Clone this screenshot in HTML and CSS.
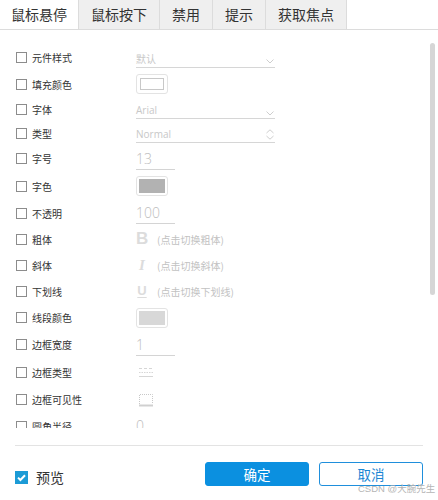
FILE: index.html
```html
<!DOCTYPE html>
<html lang="zh">
<head>
<meta charset="utf-8">
<link rel="stylesheet" href="styles.css">
</head>
<body>
<div class="tabs">
  <div class="tab active">鼠标悬停</div>
  <div class="tab">鼠标按下</div>
  <div class="tab">禁用</div>
  <div class="tab">提示</div>
  <div class="tab">获取焦点</div>
</div>

<div class="panel">
  <div class="row h27">
    <span class="cb"></span><span class="label">元件样式</span>
    <div class="select"><span>默认</span>
      <svg class="chev" width="8" height="5" viewBox="0 0 8 5"><path d="M0.5 0.5 L4 4 L7.5 0.5" fill="none" stroke="#c8c8c8" stroke-width="0.9"/></svg>
    </div>
  </div>
  <div class="row h26">
    <span class="cb"></span><span class="label">填充颜色</span>
    <div class="swatch"><span class="sw-inner sw-white"></span></div>
  </div>
  <div class="row h24">
    <span class="cb"></span><span class="label">字体</span>
    <div class="select latin"><span>Arial</span>
      <svg class="chev" width="8" height="5" viewBox="0 0 8 5"><path d="M0.5 0.5 L4 4 L7.5 0.5" fill="none" stroke="#c8c8c8" stroke-width="0.9"/></svg>
    </div>
  </div>
  <div class="row h24">
    <span class="cb"></span><span class="label">类型</span>
    <div class="select latin"><span>Normal</span>
      <svg class="chev2" width="8" height="11" viewBox="0 0 8 11"><path d="M0.5 4 L4 0.8 L7.5 4 M0.5 7 L4 10.2 L7.5 7" fill="none" stroke="#c8c8c8" stroke-width="0.9"/></svg>
    </div>
  </div>
  <div class="row h27">
    <span class="cb"></span><span class="label">字号</span>
    <div class="num">13</div>
  </div>
  <div class="row h28">
    <span class="cb"></span><span class="label">字色</span>
    <div class="swatch"><span class="sw-inner sw-dark"></span></div>
  </div>
  <div class="row h26">
    <span class="cb"></span><span class="label">不透明</span>
    <div class="num">100</div>
  </div>
  <div class="row h26">
    <span class="cb"></span><span class="label">粗体</span>
    <div class="toggle"><span class="ico ico-b">B</span><span class="hint">(点击切换粗体)</span></div>
  </div>
  <div class="row h26">
    <span class="cb"></span><span class="label">斜体</span>
    <div class="toggle"><span class="ico ico-i">I</span><span class="hint">(点击切换斜体)</span></div>
  </div>
  <div class="row h26">
    <span class="cb"></span><span class="label">下划线</span>
    <div class="toggle"><span class="ico ico-u">U</span><span class="hint">(点击切换下划线)</span></div>
  </div>
  <div class="row h27">
    <span class="cb"></span><span class="label">线段颜色</span>
    <div class="swatch"><span class="sw-inner sw-light"></span></div>
  </div>
  <div class="row h27">
    <span class="cb"></span><span class="label">边框宽度</span>
    <div class="num">1</div>
  </div>
  <div class="row h28">
    <span class="cb"></span><span class="label">边框类型</span>
    <svg class="bicon" width="16" height="14" viewBox="0 0 16 14">
      <path d="M1 3.5 H15" stroke="#d6d6d6" stroke-width="1" stroke-dasharray="3 2"/>
      <path d="M1 7.5 H15" stroke="#d6d6d6" stroke-width="1" stroke-dasharray="1.5 1"/>
      <path d="M1 11.5 H15" stroke="#d6d6d6" stroke-width="1"/>
    </svg>
  </div>
  <div class="row h27">
    <span class="cb"></span><span class="label">边框可见性</span>
    <svg class="bicon" width="16" height="14" viewBox="0 0 16 14">
      <path d="M1.5 11 V1.5 H14.5 V11" fill="none" stroke="#c8c8c8" stroke-width="1" stroke-dasharray="1 1"/>
      <path d="M1 12.5 H15" stroke="#d0d0d0" stroke-width="2"/>
    </svg>
  </div>
  <div class="row h26">
    <span class="cb"></span><span class="label">圆角半径</span>
    <div class="num nolines">0</div>
  </div>
  <div class="thumb"></div>
</div>

<div class="footer">
  <div class="sep"></div>
  <div class="actions">
    <label class="preview">
      <span class="cb-on"><svg width="13" height="13" viewBox="0 0 13 13"><path d="M3 6.6 L5.4 9 L10 4.2" fill="none" stroke="#fff" stroke-width="2"/></svg></span>
      <span>预览</span>
    </label>
    <div class="btns">
      <button class="btn primary">确定</button>
      <button class="btn ghost">取消</button>
    </div>
  </div>
  <div class="mark">CSDN @大腕先生</div>
</div>
</body>
</html>
```

FILE: styles.css
```css
* { box-sizing: border-box; }
html, body { margin: 0; padding: 0; background: #fff; }
body {
  width: 438px;
  height: 500px;
  position: relative;
  overflow: hidden;
  font-family: "Noto Sans CJK SC", "Liberation Sans", sans-serif;
  color: #333;
}

.tabs {
  display: flex;
  height: 30px;
  border-bottom: 1px solid #dcdcdc;
}
.tab {
  height: 29px;
  padding: 0 12px;
  font-size: 14px;
  line-height: 29px;
  color: #333;
  background: #efefef;
  border-right: 1px solid #dcdcdc;
  white-space: nowrap;
}
.tab.active { background: #fff; padding: 0 11px; }

.panel {
  position: relative;
  height: 398px;
  overflow: hidden;
  padding: 14px 0 0 16px;
}
.row {
  display: flex;
  align-items: center;
}
.h24 { height: 24px; }
.h26 { height: 26px; }
.h27 { height: 27px; }
.h28 { height: 28px; }

.cb {
  width: 11px;
  height: 11px;
  border: 1px solid #8c8c8c;
  background: #fff;
  flex: none;
}
.label {
  margin-left: 5px;
  width: 104px;
  font-size: 10px;
  color: #333;
  white-space: nowrap;
}

.select {
  width: 139px;
  height: 17px;
  border-bottom: 1px solid #d6d6d6;
  display: flex;
  align-items: center;
  justify-content: space-between;
  padding-right: 1px;
  font-size: 10px;
  color: #c8c8c8;
  margin-top: 3px;
}
.select.latin span { font-family: "Open Sans", "Liberation Sans", sans-serif; font-size: 10px; }
.chev { margin-top: 6px; }
.chev2 { margin-top: 1px; }

.swatch {
  width: 32px;
  height: 20px;
  border: 1px solid #e3e3e3;
  border-radius: 3px;
  padding: 2px;
  display: flex;
}
.sw-inner { flex: 1; }
.sw-white { border: 1px solid #c8c8c8; background: #fff; margin: 1px; }
.sw-dark { background: #b2b2b2; }
.sw-light { background: #d8d8d8; }

.num {
  width: 39px;
  height: 21px;
  border-bottom: 1px solid #d4d4d4;
  font-family: "Open Sans", "Liberation Sans", sans-serif;
  font-weight: 300;
  font-size: 14px;
  line-height: 20px;
  color: #bdbdbd;
  margin-top: 1px;
}
.num.nolines { border-bottom: none; }

.toggle {
  display: flex;
  align-items: center;
}
.ico {
  width: 12px;
  text-align: center;
  color: #dcdcdc;
  font-family: "Liberation Sans", sans-serif;
  font-size: 15px;
  line-height: 16px;
}
.ico-b { font-weight: bold; font-size: 17px; }
.ico-i { font-family: "Liberation Serif", serif; font-style: italic; font-weight: bold; font-size: 15px; }
.ico-u { text-decoration: underline; text-underline-offset: 2px; font-size: 13px; font-weight: bold; }
.hint {
  margin-left: 9px;
  font-size: 10px;
  color: #c2c2c2;
}
.bicon { margin-left: 2px; }

.thumb {
  position: absolute;
  left: 430px;
  top: 13px;
  width: 5px;
  height: 252px;
  border-radius: 3px;
  background: #d6d6d6;
}

.footer {
  position: relative;
  padding-top: 17px;
}
.sep {
  margin: 0 15px;
  border-top: 1px solid #e3e3e3;
}
.actions {
  display: flex;
  align-items: center;
  justify-content: space-between;
  padding: 15px 15px 0 15px;
}
.preview {
  display: flex;
  align-items: center;
  font-size: 14px;
  color: #333;
  margin-top: 6px;
}
.cb-on {
  width: 13px;
  height: 13px;
  background: #1c9bd6;
  display: flex;
  margin-right: 8px;
}
.btns { display: flex; gap: 10px; }
.btn {
  width: 104px;
  height: 24px;
  border-radius: 3px;
  font-family: "Noto Sans CJK SC", sans-serif;
  font-size: 13.5px;
  line-height: 20px;
  padding: 0;
}
.primary { background: #0b90e0; border: 1px solid #0b90e0; color: #fff; }
.ghost { background: #fff; border: 1px solid #1f8fdc; color: #1a86d4; }

.mark {
  position: absolute;
  left: 358px;
  top: 55px;
  font-family: "Liberation Sans", "Noto Sans CJK SC", sans-serif;
  font-size: 9.5px;
  line-height: 11px;
  color: #b5b5b5;
  white-space: nowrap;
}
```
